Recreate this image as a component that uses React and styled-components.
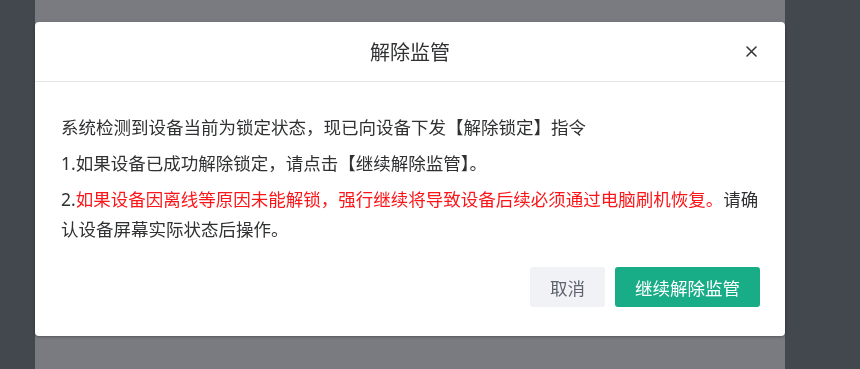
import React from 'react';
import styled, {createGlobalStyle} from "styled-components";

const GlobalStyle = createGlobalStyle`
  html, body {
    margin: 0;
    padding: 0;
    height: 100%;
    overflow: hidden;
  }
  body {
    font-family: "Noto Sans", "Noto Sans CJK SC", sans-serif;
    background: #43474e;
  }
  #root {
    height: 100%;
  }
`

function CloseIcon() {
    return (
        <svg width="11" height="11" viewBox="0 0 11 11">
            <path d="M1 1L10 10M10 1L1 10" stroke="#303133" strokeWidth="1.5" strokeLinecap="round"/>
        </svg>
    );
}

function App() {
    return (
        <>
            <GlobalStyle/>
            <Page>
                <SideStrip/>
                <MainPanel/>
                <SideStrip $width={75}/>
            </Page>

            <Overlay>
                <Dialog>
                    <DialogHeader>
                        <Title>解除监管</Title>
                        <CloseButton aria-label="关闭"><CloseIcon/></CloseButton>
                    </DialogHeader>
                    <DialogBody>
                        <Line>系统检测到设备当前为锁定状态，现已向设备下发【解除锁定】指令</Line>
                        <Line>1.如果设备已成功解除锁定，请点击【继续解除监管】。</Line>
                        <Line>
                            2.<Danger>如果设备因离线等原因未能解锁，强行继续将导致设备后续必须通过电脑刷机恢复。</Danger>请确认设备屏幕实际状态后操作。
                        </Line>
                    </DialogBody>
                    <DialogFooter>
                        <Button>取消</Button>
                        <Button $primary>继续解除监管</Button>
                    </DialogFooter>
                </Dialog>
            </Overlay>
        </>
    );
}

const Page = styled.div`
  display: flex;
  height: 100%;
`

const SideStrip = styled.div`
  width: ${p => p.$width || 35}px;
  flex-shrink: 0;
  background: #43474e;
`

const MainPanel = styled.div`
  flex: 1;
  background: #797b80;
`

const Overlay = styled.div`
  position: fixed;
  inset: 0;
  display: flex;
  align-items: flex-start;
  padding: 22px 75px 0 35px;
`

const Dialog = styled.div`
  width: 750px;
  background: #fff;
  border-radius: 4px;
  box-shadow: 0 1px 3px rgba(0, 0, 0, .3);
`

const DialogHeader = styled.div`
  position: relative;
  height: 59px;
  display: flex;
  align-items: center;
  justify-content: center;
  border-bottom: 1px solid #e4e5e7;
`

const Title = styled.h2`
  margin: 0;
  font-size: 20px;
  font-weight: 400;
  color: #303133;
  font-family: "Noto Sans CJK SC", sans-serif;
`

const CloseButton = styled.button`
  position: absolute;
  right: 28px;
  top: 24px;
  padding: 0;
  border: 0;
  background: none;
  display: flex;
  cursor: pointer;
`

const DialogBody = styled.div`
  padding: 30px 25px 17px 26px;
  font-size: 17.5px;
  line-height: 30px;
  color: #303133;
`

const Line = styled.p`
  margin: 0 0 6px;
`

const Danger = styled.span`
  color: #fb1519;
`

const DialogFooter = styled.div`
  display: flex;
  justify-content: flex-end;
  gap: 10px;
  padding: 0 25px 29px;
`

const Button = styled.button`
  height: 40px;
  padding: 0 20px;
  border: 0;
  border-radius: 3px;
  font-family: "Noto Sans CJK SC", sans-serif;
  font-size: 17.5px;
  cursor: pointer;
  background: ${p => p.$primary ? '#18ac87' : '#f1f2f5'};
  color: ${p => p.$primary ? '#fff' : '#5e6470'};
`

export default App;
